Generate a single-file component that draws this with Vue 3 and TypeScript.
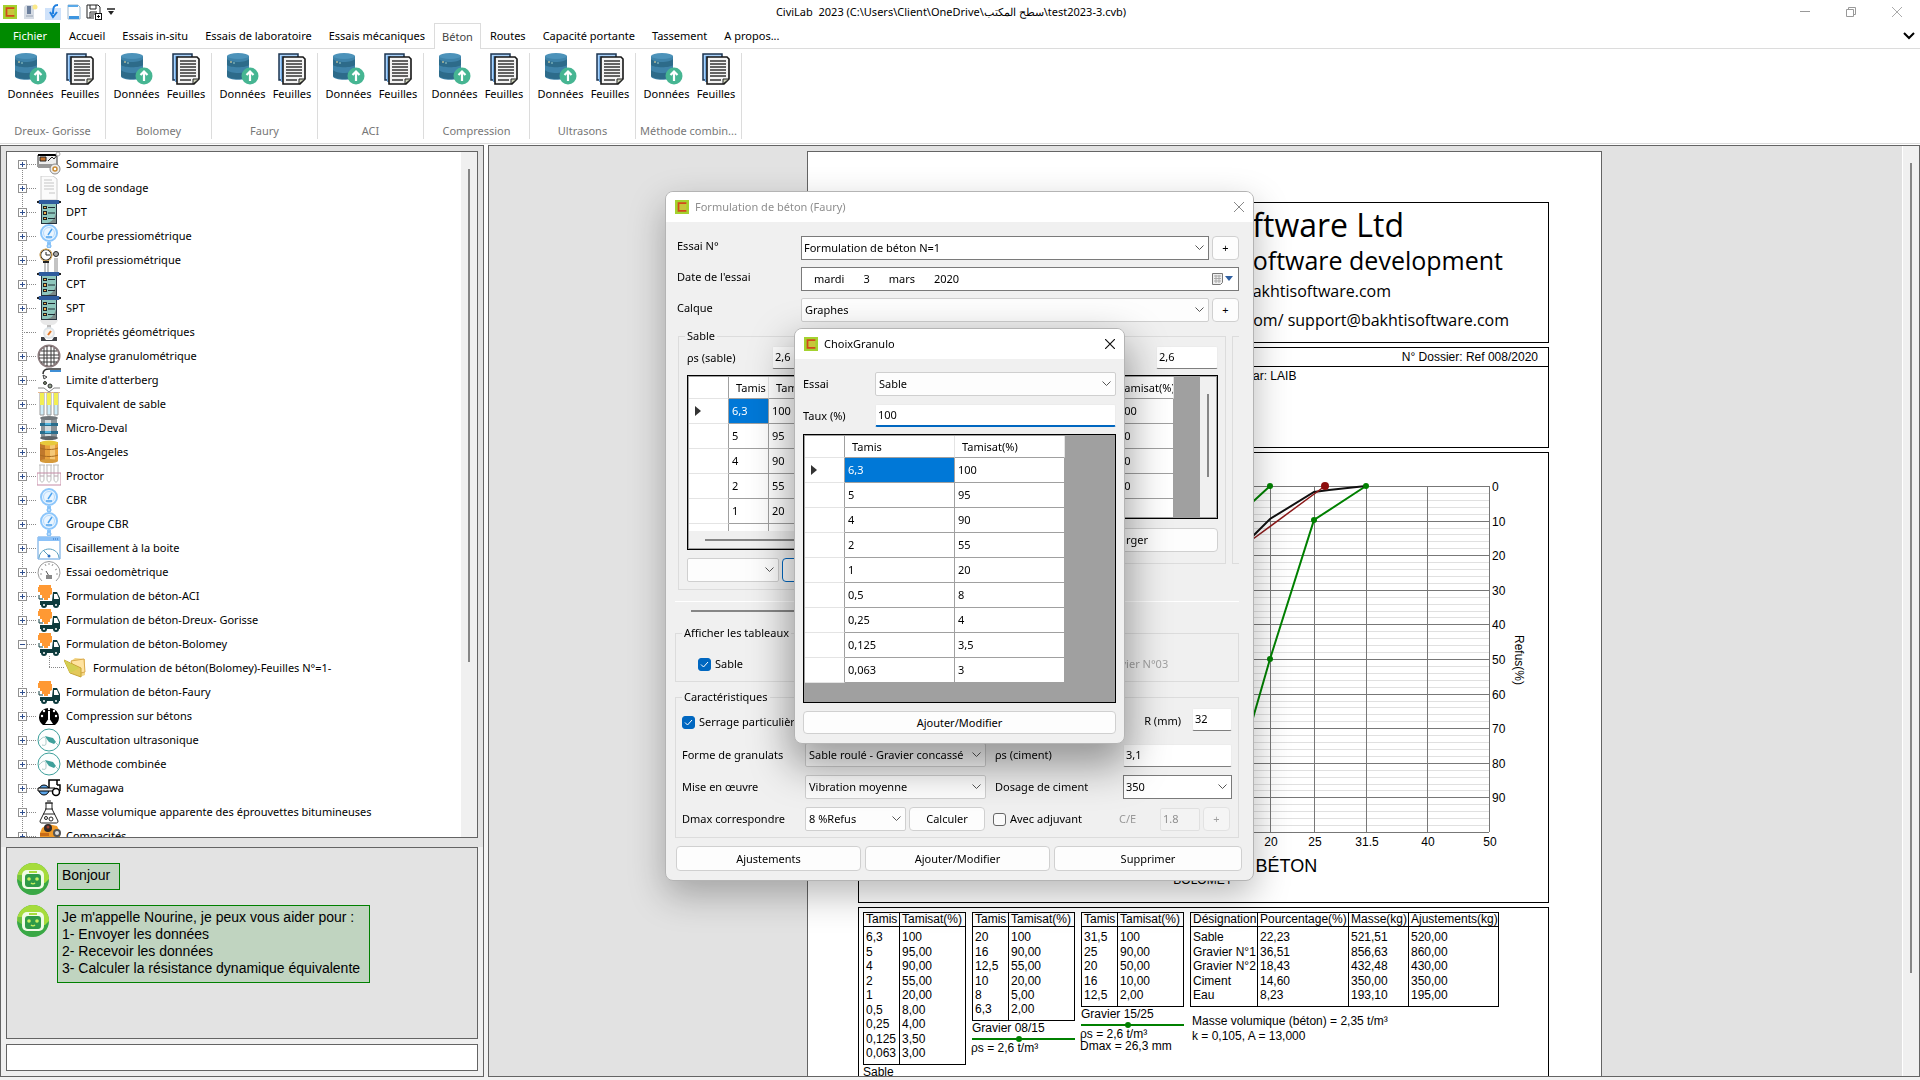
<script setup lang="ts">
import { ref } from 'vue'

interface TreeItem {
  label: string
  icon: string
  leaf?: boolean
  children?: { label: string; icon: string }[]
}

interface ResultTable {
  rows: [string, string][]
  caption: string
  line: boolean
  notes: string[]
}

const tabs = [
  'Accueil', 'Essais in-situ', 'Essais de laboratoire', 'Essais mécaniques', 'Béton',
  'Routes', 'Capacité portante', 'Tassement', 'A propos...',
]
const activeTab = ref('Béton')
const ribbonGroups = ['Dreux- Gorisse', 'Bolomey', 'Faury', 'ACI', 'Compression', 'Ultrasons', 'Méthode combin...']

const gauge =
  '<circle cx="12" cy="9" r="8" fill="#eaf5ff" stroke="#8cc6fb" stroke-width="2"/><circle cx="12" cy="9" r="5.500" fill="none" stroke="#b5dafc"/><path d="M11 11l4-6M9 13h6" stroke="#4ea3ee" stroke-width="1.500" fill="none"/><path d="M10 18h4v2h-4z" fill="#8cc6fb"/><circle cx="12" cy="22" r="2" fill="#b5dafc" stroke="#6db5f5"/>'
const server =
  '<path d="M4 3h16v21H4z" fill="#26323e"/><path d="M5 4h14v19H5z" fill="#8fc7bd"/><path d="M19 13v10h-9c5-1 8-5 9-10z" fill="#7b8a88"/><path d="M2 0h20l1 2-1 2H2L1 2z" fill="#2f5c9e"/><path d="M0 1h2v2H0zM22 1h2v2h-2z" fill="#222"/><path d="M6 6h4v3H6zM6 11h4v4H6zM6 17h4v3H6z" fill="#222"/><path d="M7 7h2v1H7zM7 12h2v2H7zM7 18h2v1H7z" fill="#f0b050"/><path d="M11 7.500h7M11 13h7M11 18.500h7" stroke="#1d2a33"/>'
const truck =
  '<path d="M2 1h12v3h1v6l-2 1v3h-2v2H7v-2H5v-3H3V8H1V3h1z" fill="#ff9933"/><path d="M2 11v4h4" fill="none" stroke="#0d3b3d" stroke-width="1"/><path d="M16 8h4l3 6v7H3v-4h12z" fill="#0d3b3d"/><path d="M17 10h3l2 5h-5z" fill="#fff"/><circle cx="7" cy="21" r="3" fill="#0d3b3d"/><circle cx="19" cy="21" r="3" fill="#0d3b3d"/><circle cx="7" cy="21" r="1" fill="#fff"/><circle cx="19" cy="21" r="1" fill="#fff"/>'
const probe =
  '<circle cx="12" cy="12" r="11" fill="#fdfefe" stroke="#3c9f9b"/><path d="M8 8l8 2 3 4-2 2-5-2-3-4z" fill="#3fa09b"/><path d="M2 13c5-6 7-4 7 0s0 5-4 4M19 15l2 2" stroke="#a9c9c7" fill="none"/>'

const icons: Record<string, string> = {
  gauge, server, truck, probe,
  summary:
    '<path d="M1 3h19v12H1z" fill="#eee" stroke="#333"/><path d="M1 3h19" stroke="#000" stroke-width="2"/><path d="M3 5h6v4H3z" fill="#c8742c" stroke="#222"/><path d="M11 9l4-4 2 2 4-5" stroke="#222" fill="none"/><path d="M1 12h14v4H1z" fill="#999"/><circle cx="21" cy="2" r="2" fill="#fff" stroke="#aaa"/><circle cx="18" cy="17" r="5" fill="#eee" stroke="#888"/><circle cx="18" cy="17" r="2" fill="#fff" stroke="#c88a33" stroke-width="1.500"/>',
  page: '<path d="M4 0h12l4 3v21H4z" fill="#fbfbfb" stroke="#ccc"/><path d="M7 4h8M7 7h10M7 10h10M7 13h10M12 17h6" stroke="#c5c5c5"/>',
  pressure:
    '<circle cx="9" cy="7" r="5.500" fill="#fff" stroke="#333" stroke-width="1.500"/><circle cx="9" cy="7" r="6" fill="none" stroke="#f0b85a"/><path d="M9 4v3h4" stroke="#222" fill="none"/><path d="M8 14v10M11 14v10M18 10v14M20 10v14" stroke="#888"/><path d="M6 14h6" stroke="#222" stroke-width="2"/><circle cx="19" cy="6" r="2.500" fill="#aaa" stroke="#222"/>',
  scale:
    '<path d="M3 0h18c-2 5-5 5-9 5s-7 0-9-5z" fill="#e8e8e8"/><path d="M10 5h4v4h-4z" fill="#bbb"/><circle cx="12" cy="13" r="6" fill="#dfe5e9"/><circle cx="12" cy="13" r="4" fill="#f7f3ee"/><path d="M11 15l3-4" stroke="#e0792b" stroke-width="2"/><path d="M4 17h3l2 3h6l2-3h3v4H4z" fill="#3d4045"/>',
  sieve:
    '<circle cx="12" cy="12" r="10.500" fill="#fff" stroke="#8a7a7c" stroke-width="2"/><path d="M4 7h16M2 11h20M2 14h20M4 18h16M7 4v16M10 2v20M14 2v20M17 4v16" stroke="#3a3a3a"/>',
  tap:
    '<path d="M24 1H12c-4 0-6 2-6 5" fill="none" stroke="#333" stroke-width="1.500"/><path d="M13 3h11" stroke="#3f8fd6" stroke-width="2"/><path d="M6 7l4 2-3 2z" fill="#eee" stroke="#444"/><circle cx="8" cy="15" r="1.500" fill="#7a8c6c" stroke="#333"/><circle cx="13" cy="18" r="2" fill="#8fa08a" stroke="#333"/><path d="M1 20h6l5 4 5-4h6" stroke="#888" fill="none"/>',
  tubes:
    '<path d="M1 0h22" stroke="#e8b88f" stroke-width="2"/><path d="M3 1h4v22H3zM10 1h4v22h-4zM17 1h4v22h-4z" fill="#cfeefa" stroke="#999"/><path d="M3 1h4v12H3zM10 1h4v12h-4zM17 1h4v12h-4z" fill="#f2ee54"/>',
  drumBlue:
    '<path d="M4 2h16v20H4z" fill="#8d9499"/><path d="M8 2h6v20H8z" fill="#d5dadd"/><path d="M3 7h18v3H3zM3 15h18v3H3z" fill="#2a6d8c"/><path d="M8 7h6v2H8zM8 15h6v2H8z" fill="#53b4dd"/><ellipse cx="12" cy="2" rx="9" ry="2" fill="#70767a"/><ellipse cx="12" cy="22" rx="9" ry="2" fill="#5c6266"/>',
  drumGold:
    '<path d="M3 2h18v19H3z" fill="#e8a13c"/><path d="M3 2h5v19H3z" fill="#c0782c"/><path d="M13 2h5v19h-5z" fill="#f5c877"/><ellipse cx="12" cy="3" rx="9" ry="2.500" fill="#e8c93b"/><path d="M3 8c4 2 14 2 18 0M3 15c4 2 14 2 18 0" stroke="#a86a20" fill="none"/><ellipse cx="12" cy="21" rx="9" ry="2" fill="#d69a3a"/>',
  proctor:
    '<path d="M3 1v14c0 4 4 4 4 0V1M10 1v14c0 4 4 4 4 0V1M17 1v14c0 4 4 4 4 0V1M2 1h6M9 1h6M16 1h6" fill="none" stroke="#bbb"/><path d="M0 9h24v12H0z" fill="none" stroke="#c48aa5"/><path d="M3 12h4M10 12h4M17 12h4" stroke="#b9a3ae"/>',
  windowGauge:
    '<path d="M1 1h22v22H1z" fill="#fff" stroke="#5f9fe0"/><path d="M1 1h22v4H1z" fill="#8cc2f8"/><path d="M16 3h1M18 3h1M20 3h1" stroke="#2a6dc0"/><path d="M2 22c1-12 19-12 20 0M12 20L6 14" fill="none" stroke="#5a9fc0"/><circle cx="12" cy="20" r="1.500" fill="#2a6dc0"/>',
  dial:
    '<path d="M5 21a11 11 0 1 1 14 0" fill="#fff" stroke="#999"/><path d="M3 14h2M4 9l2 1M8 4l1 2M12 3v2M16 4l-1 2M20 9l-2 1M21 14h-2" stroke="#999"/><path d="M12 16L9 11" stroke="#555"/><path d="M9 15h6v4H9z" fill="#888"/>',
  dialBlack:
    '<path d="M6 21a10 9.500 0 1 1 12 0z" fill="#000"/><path d="M12 8v6l4 6H8l4-6z" fill="#fff"/><circle cx="12" cy="5" r="1.200" fill="#fff"/><circle cx="7" cy="7" r="1.200" fill="#fff"/><circle cx="17" cy="7" r="1.200" fill="#fff"/><circle cx="5" cy="12" r="1.200" fill="#fff"/><circle cx="19" cy="12" r="1.200" fill="#fff"/><path d="M11 7h2v8h-2z" fill="#fff"/>',
  roller:
    '<circle cx="7" cy="14" r="5" fill="#5aa5ea" stroke="#000"/><path d="M1 12h17v3H1z" fill="#eee" stroke="#000"/><path d="M12 12V4h8v5M13 4h10M20 9h3v6" fill="none" stroke="#000" stroke-width="1.500"/><circle cx="19" cy="16" r="3.500" fill="#fff" stroke="#000" stroke-width="1.500"/>',
  flask:
    '<path d="M9 3h6v6l6 12c0 2-1 2-2 2H5c-1 0-2 0-2-2L9 9z" fill="#fff" stroke="#222"/><path d="M8 3h8M10 1h4M8 9h8M6 14h12" stroke="#222"/><circle cx="9" cy="18" r="1.500" fill="none" stroke="#222"/><circle cx="14" cy="19" r="2" fill="none" stroke="#222"/>',
  roller2:
    '<path d="M5 4l6-4 9 2 3 6v16H3V9z" fill="#f09a28"/><circle cx="11" cy="4" r="4" fill="#2f2a2a"/><circle cx="11" cy="3" r="1.500" fill="#a04030"/><circle cx="20" cy="9" r="4" fill="#555"/><circle cx="20" cy="9" r="2" fill="#ddd"/><path d="M3 9h9v3H3z" fill="#c86b18"/>',
  folder:
    '<path d="M7 5l4-3 10 1v16l-5 2z" fill="#f3d687"/><path d="M7 5l13-2 1 13-9 2z" fill="#ffe3a0" stroke="#d9a94c"/><path d="M0 4l17 8v9L6 17z" fill="#e3c95a" stroke="#c7a437"/><path d="M0 4l15 8-9 5z" fill="#d3cf52"/>',
}

const tree: TreeItem[] = [
  { label: 'Sommaire', icon: 'summary' },
  { label: 'Log de sondage', icon: 'page' },
  { label: 'DPT', icon: 'server' },
  { label: 'Courbe pressiométrique', icon: 'gauge' },
  { label: 'Profil pressiométrique', icon: 'pressure' },
  { label: 'CPT', icon: 'server' },
  { label: 'SPT', icon: 'server' },
  { label: 'Propriétés géométriques', icon: 'scale', leaf: true },
  { label: 'Analyse granulométrique', icon: 'sieve' },
  { label: "Limite d'atterberg", icon: 'tap' },
  { label: 'Equivalent de sable', icon: 'tubes' },
  { label: 'Micro-Deval', icon: 'drumBlue' },
  { label: 'Los-Angeles', icon: 'drumGold' },
  { label: 'Proctor', icon: 'proctor' },
  { label: 'CBR', icon: 'gauge' },
  { label: 'Groupe CBR', icon: 'gauge' },
  { label: 'Cisaillement à la boite', icon: 'windowGauge' },
  { label: 'Essai oedomètrique', icon: 'dial' },
  { label: 'Formulation de béton-ACI', icon: 'truck' },
  { label: 'Formulation de béton-Dreux- Gorisse', icon: 'truck' },
  {
    label: 'Formulation de béton-Bolomey',
    icon: 'truck',
    children: [{ label: 'Formulation de béton(Bolomey)-Feuilles N°=1-', icon: 'folder' }],
  },
  { label: 'Formulation de béton-Faury', icon: 'truck' },
  { label: 'Compression sur bétons', icon: 'dialBlack' },
  { label: 'Auscultation ultrasonique', icon: 'probe' },
  { label: 'Méthode combinée', icon: 'probe' },
  { label: 'Kumagawa', icon: 'roller' },
  { label: 'Masse volumique apparente des éprouvettes bitumineuses', icon: 'flask' },
  { label: 'Compacités', icon: 'roller2' },
]

const messages = [
  ['Bonjour'],
  [
    "Je m'appelle Nourine, je peux vous aider pour :",
    '1- Envoyer les données',
    '2- Recevoir les données',
    '3- Calculer la résistance dynamique équivalente',
  ],
]
const chatInput = ref('')

const sable: [string, string][] = [
  ['6,3', '100'], ['5', '95'], ['4', '90'], ['2', '55'], ['1', '20'],
  ['0,5', '8'], ['0,25', '4'], ['0,125', '3,5'], ['0,063', '3'],
]
const gravier: [string, string][] = [['20', '100'], ['16', '90'], ['12,5', '50'], ['10', '20'], ['8', '']]

const results: ResultTable[] = [
  {
    rows: [
      ['6,3', '100'], ['5', '95,00'], ['4', '90,00'], ['2', '55,00'], ['1', '20,00'],
      ['0,5', '8,00'], ['0,25', '4,00'], ['0,125', '3,50'], ['0,063', '3,00'],
    ],
    caption: 'Sable', line: false, notes: [],
  },
  {
    rows: [['20', '100'], ['16', '90,00'], ['12,5', '55,00'], ['10', '20,00'], ['8', '5,00'], ['6,3', '2,00']],
    caption: 'Gravier 08/15', line: true, notes: ['ρs = 2,6 t/m³'],
  },
  {
    rows: [['31,5', '100'], ['25', '90,00'], ['20', '50,00'], ['16', '10,00'], ['12,5', '2,00']],
    caption: 'Gravier 15/25', line: true, notes: ['ρs = 2,6 t/m³', 'Dmax = 26,3 mm'],
  },
]
const mix = [
  ['Sable', '22,23', '521,51', '520,00'],
  ['Gravier N°1', '36,51', '856,63', '860,00'],
  ['Gravier N°2', '18,43', '432,48', '430,00'],
  ['Ciment', '14,60', '350,00', '350,00'],
  ['Eau', '8,23', '193,10', '195,00'],
]

const chartTop = 33
const chartHeight = 346
const yAt = (refus: number) => Math.round(chartTop + (refus * chartHeight) / 100)
const minor = Array.from({ length: 50 }, (_, i) => i * 2).filter((v) => v % 10 !== 0)
const major = Array.from({ length: 11 }, (_, i) => i * 10)
const sieves = [
  { x: 335, label: '12.5' }, { x: 373, label: '16' }, { x: 411, label: '20' }, { x: 455, label: '25' },
  { x: 507, label: '31.5' }, { x: 568, label: '40' }, { x: 630, label: '50' },
]

const taux = ref('100')
const showSable = ref(true)
const serrage = ref(true)
</script>

<template>
  <div class="app">
    <header class="titlebar">
      <div class="quick">
        <svg class="logo" viewBox="0 0 16 16"><rect width="16" height="16" fill="#a4d22f" /><rect x="4" y="4" width="9" height="8" fill="#c8c53a" /><path d="M13 3.500H4v9h9" fill="none" stroke="#d2491b" stroke-width="2" /></svg>
        <svg width="16" height="16" viewBox="0 0 16 16"><path d="M3 1h8v14H1V3z" fill="#d5dbe3" /><path d="M4 2h4v8H4z" fill="#6c7f9c" /><path d="M3 12h7" stroke="#9aa5b5" /><circle cx="12" cy="3" r="2.500" fill="#fbe98a" /></svg>
        <svg width="18" height="16" viewBox="0 0 18 16"><path d="M1 4h16v12H1z" fill="#cfe2fa" /><path d="M14 1c-4 0-5 2-5 9M6 8l3 5 4-5" fill="none" stroke="#1f7fe0" stroke-width="2" /></svg>
        <svg width="14" height="16" viewBox="0 0 14 16"><path d="M1 1h10l2 2v12H1z" fill="#fff" stroke="#9db8cf" /><path d="M1 1h10v2H1z" fill="#5aa9e8" /><path d="M2 12h10v3H2z" fill="#3d95e0" /></svg>
        <svg width="16" height="16" viewBox="0 0 16 16"><path d="M1 1h11l2 2v7M8 14H1V1M4 1v4h6V1M4 14V8h7M5 10h4M5 12h3" fill="none" stroke="#222" /><rect x="9.500" y="9.500" width="6" height="6" fill="#fff" stroke="#111" /><path d="M12.500 11v3M11 12.500h3" stroke="#111" /></svg>
        <svg width="8" height="8" viewBox="0 0 8 8"><path d="M0 1h8" stroke="#222" stroke-width="1.500" /><path d="M1 3h6L4 7z" fill="#222" /></svg>
      </div>
      <h1>CiviLab&nbsp; 2023 (C:\Users\Client\OneDrive\سطح المكتب\test2023-3.cvb)</h1>
      <div class="winbtns">
        <button aria-label="Réduire"><svg width="10" height="10"><path d="M0 4.500h10" stroke="#999" /></svg></button>
        <button aria-label="Restaurer"><svg width="10" height="10"><path d="M2.500 2V.5h7v7H8M.5 2.500h7v7h-7z" fill="none" stroke="#999" /></svg></button>
        <button aria-label="Fermer"><svg width="10" height="10"><path d="M0 0l10 10M10 0L0 10" stroke="#aaa" /></svg></button>
      </div>
    </header>

    <nav class="tabs">
      <button class="file">Fichier</button>
      <button v-for="t in tabs" :key="t" class="tab" :class="{ active: t === activeTab }" @click="activeTab = t">{{ t }}</button>
      <button class="collapse" aria-label="Réduire le ruban"><svg width="12" height="8" viewBox="0 0 12 8"><path d="M1 1l5 5 5-5" fill="none" stroke="#000" stroke-width="2" /></svg></button>
    </nav>

    <div class="ribbon">
      <section v-for="g in ribbonGroups" :key="g" class="rgroup">
        <div class="rbtns">
          <button class="rbtn">
            <svg width="32" height="32" viewBox="0 0 32 32">
              <path d="M0 3v20c0 5 22 5 22 0V3z" fill="#3f83a9" />
              <ellipse cx="11" cy="3" rx="11" ry="3" fill="#4d93ba" />
              <path d="M0 6c3 4 19 4 22 0v6c-3 3-19 3-22 0zM0 17c3 4 19 4 22 0v6c-3 4-19 4-22 0z" fill="#2d6b8a" />
              <path d="M3 9h2" stroke="#f3e0a0" /><path d="M6 10h2" stroke="#9cc" />
              <circle cx="23" cy="23" r="8.500" fill="#46b592" />
              <path d="M23 28v-9M19.500 22l3.500-3.500 3.500 3.500" fill="none" stroke="#fff" stroke-width="2.200" />
            </svg>
            <span>Données</span>
          </button>
          <button class="rbtn sheets">
            <svg width="28" height="32" viewBox="0 0 28 32">
              <path d="M1 1h19v26H1z" fill="#a9d2fb" stroke="#1c3550" stroke-width="1.500" />
              <path d="M3 3h4v26H3z" fill="#6ea6de" />
              <path d="M5 4h20l2 2v20l-5 5H5z" fill="#f4f4f4" stroke="#161616" stroke-width="1.600" />
              <path d="M8 8h16M8 11h16M8 14h16M8 17h16M8 20h16M8 23h16M8 27h11" stroke="#333" stroke-width="1.400" />
              <path d="M21 31v-5h6z" fill="#cbd0b8" stroke="#222" />
            </svg>
            <span>Feuilles</span>
          </button>
        </div>
        <p>{{ g }}</p>
      </section>
    </div>

    <main class="work">
      <aside class="side">
        <div class="treewrap">
          <div class="treebox">
            <ul class="tree">
              <li v-for="n in tree" :key="n.label">
                <div class="node">
                  <span v-if="n.leaf" class="noexp"></span>
                  <button v-else class="exp" :aria-label="n.label">
                    <svg width="9" height="9"><path :d="n.children ? 'M2 4.500h5' : 'M2 4.500h5M4.500 2v5'" stroke="#2f4f8f" /></svg>
                  </button>
                  <i class="dots"></i>
                  <svg width="24" height="24" viewBox="0 0 24 24" v-html="icons[n.icon]"></svg>
                  <span class="name">{{ n.label }}</span>
                </div>
                <ul v-if="n.children" class="sub">
                  <li v-for="c in n.children" :key="c.label" class="node">
                    <i class="elbow"></i>
                    <svg width="24" height="24" viewBox="0 0 24 24" v-html="icons[c.icon]"></svg>
                    <span class="name">{{ c.label }}</span>
                  </li>
                </ul>
              </li>
            </ul>
            <div class="vscroll"><i></i></div>
          </div>
        </div>
        <div class="chatwrap">
          <div class="chat">
            <div v-for="(m, i) in messages" :key="i" class="msg">
              <svg width="32" height="32" viewBox="0 0 32 32">
                <circle cx="16" cy="16" r="16" fill="#3aa845" />
                <path d="M0 16a16 16 0 0 1 32 0l-4 4H6z" fill="#a6dc3c" />
                <path d="M1 12a16 16 0 0 0 14 20V12z" fill="#38a848" opacity=".5" />
                <rect x="5" y="7" width="22" height="19" rx="5" fill="#f1fbe6" />
                <rect x="12" y="8" width="8" height="2" fill="#a6dc3c" />
                <rect x="8" y="11" width="16" height="13" rx="3" fill="#2f9a48" />
                <circle cx="12" cy="16" r="1.800" fill="#c8f060" /><circle cx="20" cy="16" r="1.800" fill="#c8f060" />
                <path d="M14 20c1 1 3 1 4 0" stroke="#c8f060" fill="none" stroke-width="1.500" />
              </svg>
              <div class="bubble"><p v-for="l in m" :key="l">{{ l }}</p></div>
            </div>
          </div>
          <input v-model="chatInput" class="chatinput" aria-label="Message" />
        </div>
      </aside>

      <section class="canvas">
        <div class="scrollarea">
          <article class="sheet">
            <div class="box letterhead">
              <p class="l1">Bakhti Software Ltd</p>
              <p class="l2">Geotechnical software development</p>
              <p class="l3">www.bakhtisoftware.com</p>
              <p class="l4">contact@bakhtisoftware.com/ support@bakhtisoftware.com</p>
            </div>
            <div class="box project">
              <p class="ref">N° Dossier: Ref 008/2020</p>
              <p class="by">Réalisé par: LAIB</p>
            </div>
            <div class="box chart">
              <svg width="688" height="448" viewBox="0 0 688 448">
                <line v-for="v in minor" :key="'m' + v" x1="40" x2="630" :y1="yAt(v) + 0.5" :y2="yAt(v) + 0.5" stroke="#e0e0e0" />
                <line v-for="v in major" :key="'j' + v" x1="40" x2="630" :y1="yAt(v) + 0.5" :y2="yAt(v) + 0.5" stroke="#777" />
                <line v-for="s in sieves" :key="s.label" :x1="s.x + 0.5" :x2="s.x + 0.5" y1="33" y2="379" stroke="#777" />
                <polyline points="335,206 373,68 411,33" class="green" />
                <polyline points="335,330 373,331 394,265 411,206 455,67 507,33" class="green" />
                <polyline points="335,130 394,83 411,66 455,39 470,37 507,33" fill="none" stroke="#111" stroke-width="2" />
                <polyline points="335,130 394,86 466,33" fill="none" stroke="#8c1a1a" stroke-width="1.500" />
                <g fill="#008000"><circle cx="411" cy="33" r="3" /><circle cx="507" cy="33" r="3" /><circle cx="455" cy="67" r="3" /><circle cx="411" cy="206" r="3" /></g>
                <circle cx="466" cy="33" r="4" fill="#8c0d0d" />
                <g class="axis">
                  <text v-for="v in major.slice(0, 10)" :key="v" x="633" :y="yAt(v) + 5">{{ v }}</text>
                  <text v-for="s in sieves" :key="s.label" :x="s.x + 1" y="393" text-anchor="middle">{{ s.label }}</text>
                  <text transform="translate(656 182) rotate(90)">Refus(%)</text>
                </g>
                <text class="ctitle" x="345" y="419" text-anchor="middle">FORMULATION DE BÉTON</text>
                <text class="csub" x="344" y="431" text-anchor="middle">BOLOMEY</text>
              </svg>
            </div>
            <div class="box tables">
              <div v-for="(r, i) in results" :key="i" class="tcol">
                <table class="dt small">
                  <thead><tr><th>Tamis</th><th>Tamisat(%)</th></tr></thead>
                  <tbody><tr v-for="row in r.rows" :key="row[0]"><td>{{ row[0] }}</td><td>{{ row[1] }}</td></tr></tbody>
                </table>
                <p class="cap">{{ r.caption }}</p>
                <svg v-if="r.line" width="103" height="6" viewBox="0 0 103 6"><path d="M0 3h103" stroke="#008000" stroke-width="2" /><circle cx="47" cy="3" r="3" fill="#008000" /></svg>
                <p v-for="n in r.notes" :key="n" class="note">{{ n }}</p>
              </div>
              <div class="tcol">
                <table class="dt mix">
                  <thead><tr><th>Désignation</th><th>Pourcentage(%)</th><th>Masse(kg)</th><th>Ajustements(kg)</th></tr></thead>
                  <tbody><tr v-for="row in mix" :key="row[0]"><td v-for="c in row" :key="c">{{ c }}</td></tr></tbody>
                </table>
                <p class="sum">Masse volumique (béton) = 2,35 t/m³</p>
                <p class="sum tight">k = 0,105, A = 13,000</p>
              </div>
            </div>
          </article>
        </div>
        <div class="vscroll page"><i></i></div>
      </section>
    </main>

    <div class="layer">
      <div class="dialog faury" role="dialog" aria-label="Formulation de béton (Faury)">
        <div class="dtitle inactive">
          <svg class="logo" viewBox="0 0 16 16"><rect width="16" height="16" fill="#a4d22f" /><rect x="4" y="4" width="9" height="8" fill="#c8c53a" /><path d="M13 3.500H4v9h9" fill="none" stroke="#d2491b" stroke-width="2" /></svg>
          <h2>Formulation de béton (Faury)</h2>
          <button aria-label="Fermer"><svg width="10" height="10"><path d="M0 0l10 10M10 0L0 10" stroke="#888" /></svg></button>
        </div>
        <div class="fbody">
          <div class="frow">
            <label for="essai">Essai N°</label>
            <select id="essai" class="combo dark"><option>Formulation de béton N=1</option></select>
            <button class="btn plus">+</button>
          </div>
          <div class="frow">
            <label for="jour">Date de l'essai</label>
            <div class="date">
              <button id="jour">mardi</button><span>3</span><span>mars</span><span>2020</span>
              <svg width="22" height="14" viewBox="0 0 22 14"><path d="M1.500 1.500h10v9l-2 2h-8z" fill="#eee" stroke="#777" /><path d="M3 4h7M3 6.500h7M3 9h7M5 3v8M8 3v8" stroke="#aaa" /><path d="M14 4h8l-4 5z" fill="#2f5fa0" /></svg>
            </div>
          </div>
          <div class="frow">
            <label for="calque">Calque</label>
            <select id="calque" class="combo"><option>Graphes</option></select>
            <button class="btn plus">+</button>
          </div>

          <div class="pane">
            <div class="groups">
              <fieldset class="g g1">
                <legend>Sable</legend>
                <div class="rho"><label for="r1">ρs (sable)</label><input id="r1" class="txt" value="2,6" /></div>
                <div class="grid tall">
                  <div class="clip">
                    <table>
                      <thead><tr><th class="rh"></th><th>Tamis</th><th>Tamisat(%)</th></tr></thead>
                      <tbody>
                        <tr v-for="(r, i) in sable.slice(0, 6)" :key="r[0]"><td class="rh"><svg v-if="i === 0" width="6" height="10"><path d="M0 0l6 5-6 5z" fill="#333" /></svg></td><td :class="{ sel: i === 0 }">{{ i < 5 ? r[0] : '' }}</td><td>{{ i < 5 ? r[1] : '' }}</td></tr>
                      </tbody>
                    </table>
                  </div>
                  <div class="hscroll"><i></i></div>
                </div>
                <div class="under"><select class="combo" aria-label="Tamis"><option></option></select><button class="btn focus">+</button></div>
              </fieldset>
              <fieldset class="g g2">
                <legend>Gravier N°01</legend>
                <div class="rho"><label for="r2">ρs (gravier)</label><input id="r2" class="txt" value="2,6" /></div>
                <div class="grid short">
                  <div class="clip">
                    <table>
                      <thead><tr><th class="rh"></th><th>Tamis</th><th>Tamisat(%)</th></tr></thead>
                      <tbody>
                        <tr v-for="r in gravier" :key="r[0]"><td class="rh"></td><td>{{ r[0] }}</td><td>{{ r[1] }}</td></tr>
                      </tbody>
                    </table>
                  </div>
                  <div class="vscroll inner"><i></i></div>
                </div>
                <button class="btn load">Charger</button>
              </fieldset>
              <fieldset class="g g3"></fieldset>
            </div>
            <div class="panescroll"><i></i></div>
          </div>

          <fieldset class="show">
            <legend>Afficher les tableaux</legend>
            <label><input v-model="showSable" type="checkbox" />Sable</label>
            <label><input type="checkbox" />Gravier N°01</label>
            <label><input type="checkbox" />Gravier N°02</label>
            <label class="off"><input type="checkbox" disabled />Gravier N°03</label>
          </fieldset>

          <fieldset class="carac">
            <legend>Caractéristiques</legend>
            <div class="crow first">
              <label class="check"><input v-model="serrage" type="checkbox" />Serrage particulière</label>
              <label class="rmm" for="rmm">R (mm)</label>
              <input id="rmm" class="txt w40" value="32" />
            </div>
            <div class="crow">
              <label for="forme">Forme de granulats</label>
              <select id="forme" class="combo"><option>Sable roulé - Gravier concassé</option></select>
              <label for="cim">ρs (ciment)</label>
              <input id="cim" class="txt" value="3,1" />
            </div>
            <div class="crow">
              <label for="mise">Mise en œuvre</label>
              <select id="mise" class="combo"><option>Vibration moyenne</option></select>
              <label for="dosage">Dosage de ciment</label>
              <select id="dosage" class="combo dark"><option>350</option></select>
            </div>
            <div class="crow last">
              <label for="dmax">Dmax correspondre</label>
              <select id="dmax" class="combo"><option>8 %Refus</option></select>
              <button class="btn">Calculer</button>
              <label class="check"><input type="checkbox" />Avec adjuvant</label>
              <label class="ce" for="ce">C/E</label>
              <input id="ce" class="txt w40" value="1.8" disabled />
              <button class="btn plus" disabled>+</button>
            </div>
          </fieldset>

          <div class="actions">
            <button class="btn">Ajustements</button>
            <button class="btn">Ajouter/Modifier</button>
            <button class="btn">Supprimer</button>
          </div>
        </div>
      </div>

      <div class="dialog choix" role="dialog" aria-label="ChoixGranulo">
        <div class="dtitle">
          <svg class="logo" viewBox="0 0 16 16"><rect width="16" height="16" fill="#a4d22f" /><rect x="4" y="4" width="9" height="8" fill="#c8c53a" /><path d="M13 3.500H4v9h9" fill="none" stroke="#d2491b" stroke-width="2" /></svg>
          <h2>ChoixGranulo</h2>
          <button aria-label="Fermer"><svg width="10" height="10"><path d="M0 0l10 10M10 0L0 10" stroke="#111" stroke-width="1.200" /></svg></button>
        </div>
        <div class="cbody">
          <div class="xrow"><label for="xessai">Essai</label><select id="xessai" class="combo"><option>Sable</option></select></div>
          <div class="xrow"><label for="taux">Taux (%)</label><input id="taux" v-model="taux" class="txt active" /></div>
          <div class="grid main">
            <table>
              <thead><tr><th class="rh"></th><th>Tamis</th><th>Tamisat(%)</th></tr></thead>
              <tbody>
                <tr v-for="(r, i) in sable" :key="r[0]"><td class="rh"><svg v-if="i === 0" width="6" height="10"><path d="M0 0l6 5-6 5z" fill="#333" /></svg></td><td :class="{ sel: i === 0 }">{{ r[0] }}</td><td>{{ r[1] }}</td></tr>
              </tbody>
            </table>
          </div>
          <button class="btn wide">Ajouter/Modifier</button>
        </div>
      </div>
    </div>
  </div>
</template>

<style>
body { margin: 0; }
</style>

<style scoped>
.app {
  height: 100vh;
  display: flex;
  flex-direction: column;
  overflow: hidden;
  background: #fff;
  color: #000;
  font-family: 'Noto Sans', 'Open Sans', sans-serif;
  font-size: 11px;
  line-height: 16px;
}
.app * { box-sizing: border-box; }
h1, h2, p, ul { margin: 0; padding: 0; font-weight: 400; font-size: inherit; }
ul { list-style: none; }
button, input, select { font: inherit; color: inherit; margin: 0; }
svg { display: block; flex: none; }
.logo { width: 16px; height: 14px; }

.titlebar { height: 23px; display: flex; align-items: center; flex: none; }
.quick { width: 120px; padding-left: 2px; display: flex; align-items: center; gap: 5px; }
.titlebar h1 { flex: 1; text-align: center; white-space: nowrap; }
.winbtns { width: 138px; display: flex; }
.winbtns button { width: 46px; height: 23px; border: 0; background: none; display: grid; place-items: center; padding: 0; }

.tabs { height: 26px; flex: none; display: flex; gap: 1px; border-bottom: 1px solid #dcdcdc; }
.tabs button { border: 0; background: none; padding: 0 8px; white-space: nowrap; }
.tabs .file { width: 60px; background: #008a00; color: #fff; }
.tabs .tab.active { border: 1px solid #dcdcdc; border-bottom: 0; background: #fff; color: #444; padding: 0 7px; margin-bottom: -1px; }
.tabs .collapse { margin-left: auto; padding: 0 5px; }

.ribbon { height: 95px; flex: none; display: flex; padding-top: 4px; border-bottom: 1px solid #dcdcdc; }
.rgroup { width: 106px; height: 86px; border-right: 1px solid #dcdcdc; display: flex; flex-direction: column; justify-content: space-between; }
.rbtns { display: flex; padding-left: 7px; gap: 6px; }
.rbtn { border: 0; background: none; padding: 0; width: 47px; display: flex; flex-direction: column; align-items: center; gap: 1px; }
.rbtn.sheets { width: 40px; }
.rgroup p { text-align: center; color: #777; white-space: nowrap; }

.work { flex: 1; min-height: 0; display: flex; gap: 4px; margin-top: 1px; padding-bottom: 3px; background: linear-gradient(#fff, #f2f2f2); }
.side { width: 484px; border: 1px solid #646464; display: flex; flex-direction: column; background: #f0f0f0; min-height: 0; }
.treewrap { flex: 1; min-height: 0; padding: 5px 5px 9px; background: #e3e3e3; display: flex; }
.treebox { flex: 1; min-height: 0; border: 1px solid #646464; background: #fff; display: flex; overflow: hidden; }
.tree { flex: 1; height: 100%; overflow: hidden; background: repeating-linear-gradient(#888 0 1px, transparent 1px 2px) 15px 12px / 1px 100% no-repeat; }
.node { height: 24px; display: flex; align-items: center; white-space: nowrap; padding-left: 11px; }
.exp { width: 9px; height: 9px; padding: 0; border: 0; outline: 1px solid #919191; outline-offset: -1px; background: #fff; }
.dots { width: 10px; height: 1px; background: repeating-linear-gradient(90deg, #888 0 1px, transparent 1px 2px); }
.noexp { width: 9px; height: 1px; background: repeating-linear-gradient(90deg, transparent 0 1px, #888 1px 2px) right / 4px 1px no-repeat; }
.name { padding-left: 5px; }
.sub .node { padding-left: 42px; }
.elbow { width: 15px; height: 12px; margin-bottom: 12px; background: repeating-linear-gradient(#888 0 1px, transparent 1px 2px) left / 1px 100% no-repeat, repeating-linear-gradient(90deg, #888 0 1px, transparent 1px 2px) bottom / 100% 1px no-repeat; }
.vscroll { width: 16px; background: #f0f0f0; display: flex; justify-content: center; flex: none; }
.vscroll i { width: 2px; background: #868686; }
.treebox .vscroll i { margin: 17px 0 175px; }

.chatwrap { padding: 0 5px 5px; display: flex; flex-direction: column; gap: 5px; }
.chat { height: 192px; border: 1px solid #646464; background: #e3e3e3; padding: 15px 10px; display: flex; flex-direction: column; gap: 10px; font-family: 'Liberation Sans', Arial, sans-serif; font-size: 14px; }
.msg { display: flex; gap: 8px; align-items: flex-start; }
.bubble { border: 1px solid #008000; background: #c0d4c0; padding: 3px 9px 5px 4px; line-height: 17px; }
.chatinput { height: 27px; border: 1px solid #646464; background: #fff; outline: 0; padding: 0 4px; }

.canvas { flex: 1; min-width: 0; border: 1px solid #646464; background: #e2e2e2; display: flex; overflow: hidden; }
.scrollarea { flex: 1; min-width: 0; padding: 5px 0 0 18px; display: flex; justify-content: center; }
.vscroll.page { width: 17px; border-left: 1px solid #fff; }
.vscroll.page i { margin: 17px 0 103px; }
.sheet { width: 795px; flex: none; height: 1120px; background: #fff; border: 1px solid #646464; padding: 50px 52px 0 50px; display: flex; flex-direction: column; gap: 4px; font-family: 'Liberation Sans', Arial, sans-serif; font-size: 12px; line-height: 14px; }
.box { border: 1px solid #000; }
.letterhead { height: 141px; padding-top: 3px; font-family: 'Open Sans', sans-serif; text-align: right; overflow: hidden; white-space: nowrap; }
.l1 { font-size: 32px; line-height: 38px; padding-right: 144px; }
.l2 { font-size: 25px; line-height: 32px; padding-right: 45px; }
.l3 { font-size: 16px; line-height: 30px; padding-right: 157px; }
.l4 { font-size: 16px; line-height: 28px; padding-right: 39px; }
.project { height: 101px; }
.ref { text-align: right; padding: 2px 10px; border-bottom: 1px solid #000; }
.by { padding: 2px 0 0 344px; }
.chart { height: 451px; }
.green { fill: none; stroke: #008000; stroke-width: 2; }
.axis { font-size: 12px; }
.ctitle { font-size: 18px; }
.csub { font-size: 12px; }
.tables { flex: 1; padding: 4px; display: flex; gap: 6px; align-items: flex-start; white-space: nowrap; }
.dt { border-collapse: collapse; table-layout: fixed; width: 103px; border: 1px solid #000; }
.dt th { font-weight: 400; text-align: left; padding: 0 0 0 2px; border: 1px solid #000; height: 14px; line-height: 13px; }
.dt td { padding: 0 0 0 2px; border: 0 solid #000; border-left-width: 1px; line-height: 14px; height: 14px; }
.dt tbody tr:nth-child(even) td { height: 15px; }
.dt tbody tr:first-child td { padding-top: 3px; }
.dt tbody tr:last-child td { padding-bottom: 4px; }
.small th:first-child { width: 36px; }
.mix { width: 309px; }
.mix th:nth-child(1) { width: 67px; }
.mix th:nth-child(2) { width: 91px; }
.mix th:nth-child(3) { width: 60px; }
.cap { line-height: 15px; }
.note { line-height: 11px; padding-top: 1px; margin-left: -1px; }
.sum { line-height: 15px; padding: 7px 0 0 2px; }
.sum.tight { padding-top: 0; }

.layer { position: fixed; inset: 0 1px 8px 0; display: grid; place-items: center; pointer-events: none; }
.dialog { grid-area: 1 / 1; pointer-events: auto; background: #f0f0f0; border: 1px solid #b4b4b4; border-radius: 8px; overflow: hidden; }
.faury { width: 589px; height: 690px; box-shadow: 0 14px 36px rgba(0, 0, 0, 0.28); }
.choix { width: 331px; height: 416px; box-shadow: 0 18px 40px 4px rgba(0, 0, 0, 0.38); }
.dtitle { height: 30px; background: #fff; display: flex; align-items: center; gap: 5px; padding: 0 9px 1px 8px; }
.dtitle h2 { flex: 1; }
.dtitle.inactive h2 { color: #8f8f8f; }
.dtitle button { border: 0; background: none; padding: 0; }

.combo { appearance: none; height: 24px; border: 1px solid #cfcfcf; border-radius: 2px; padding: 0 18px 0 3px; outline: 0; background: #fdfdfd url("data:image/svg+xml,%3Csvg xmlns='http://www.w3.org/2000/svg' width='9' height='6'%3E%3Cpath d='M.5 .5l4 4 4-4' fill='none' stroke='%23555'/%3E%3C/svg%3E") right 4px center no-repeat; }
.combo.dark { border-color: #7a7a7a; border-radius: 0; background-color: #fff; padding-left: 2px; }
.btn { height: 24px; border: 1px solid #d0d0d0; border-radius: 4px; background: #fdfdfd; padding: 0; text-align: center; }
.btn:disabled { color: #a0a0a0; background: #f5f5f5; border-color: #e2e2e2; }
.plus { width: 27px; flex: none; }
.txt { height: 23px; min-width: 0; border: 1px solid #ececec; border-bottom-color: #7f7f7f; background: #fff; padding: 0 2px 2px; outline: 0; border-radius: 2px; }
.txt:disabled { background: #f3f3f3; border-color: #e0e0e0; color: #8f8f8f; }
.txt.active { border-bottom: 2px solid #0067c0; }
fieldset { border: 1px solid #dcdcdc; margin: 0; padding: 0; min-width: 0; }
legend { padding: 0 2px; line-height: 16px; }
input[type='checkbox'] { appearance: none; width: 13px; height: 13px; flex: none; border: 1px solid #666; border-radius: 3px; background: #fafafa; }
input[type='checkbox']:checked { border-color: #0067c0; background: #0067c0 url("data:image/svg+xml,%3Csvg xmlns='http://www.w3.org/2000/svg' width='9' height='7'%3E%3Cpath d='M1 3.500l2.500 2.500 4.500-5' fill='none' stroke='%23fff'/%3E%3C/svg%3E") center no-repeat; }

.fbody { padding: 14px 14px 0 9px; display: flex; flex-direction: column; }
.frow { display: flex; height: 24px; margin-bottom: 7px; gap: 3px; }
.frow label { width: 123px; padding: 2px 0 0 2px; flex: none; }
.frow .combo { flex: 1; min-width: 0; }
.date { flex: 1; border: 1px solid #7a7a7a; background: #fff; display: flex; align-items: center; padding: 0 5px 0 12px; gap: 19px; }
.date button { border: 0; background: none; padding: 0; }
.date svg { margin-left: auto; }

.pane { height: 300px; margin-top: -4px; display: flex; flex-direction: column; }
.groups { flex: none; height: 276px; padding: 3px 0 0 3px; display: flex; gap: 6px; align-items: flex-start; overflow: hidden; }
.g { width: 271px; flex: none; padding: 2px 7px 0 8px; }
.g1 { height: 262px; }
.g2 { height: 236px; }
.g3 { height: 228px; margin-top: 8px; }
.g legend { margin-left: -2px; }
.rho { display: flex; justify-content: space-between; align-items: center; margin-bottom: 6px; }
.rho .txt { width: 62px; }
.g1 .rho .txt { width: 169px; }
.under { display: flex; gap: 3px; margin-top: 8px; }
.under .combo { width: 92px; }
.under .btn { width: 30px; }
.btn.focus { border-color: #0067c0; }
.load { display: block; width: 182px; margin: 9px 0 0 auto; }

.grid { border: 1px solid #000; background: #a0a0a0; padding: 1px; overflow: hidden; display: flex; align-items: flex-start; }
.grid.tall { height: 175px; flex-direction: column; }
.grid.short { height: 144px; }
.clip { flex: 1; min-height: 0; overflow: hidden; align-self: stretch; }
.grid table { border-collapse: separate; border-spacing: 0; table-layout: fixed; width: 224px; }
.grid th, .grid td { background: #fff; font-weight: 400; text-align: left; border: 0 solid #a0a0a0; border-width: 0 1px 1px 0; padding: 0 0 0 3px; overflow: hidden; white-space: nowrap; }
.grid th { height: 22px; padding-left: 7px; border-right-color: #e4e4e4; }
.grid td { height: 25px; }
.grid .rh { width: 40px; border-bottom-color: #e4e4e4; padding-left: 6px; border-right-color: #a0a0a0; }
.grid td.sel { background: #0078d7; color: #fff; }
.tall th:nth-child(2) { width: 40px; }
.short table { width: 208px; }
.short th:nth-child(3) { width: 59px; padding-left: 4px; }
.hscroll { height: 17px; align-self: stretch; flex: none; background: #f0f0f0; padding: 8px 40px 0 16px; }
.hscroll i, .panescroll i { display: block; height: 2px; background: #868686; }
.vscroll.inner { align-self: stretch; }
.vscroll.inner i { margin: 17px 0 40px; }
.panescroll { border-top: 1px solid #fff; height: 20px; padding: 8px 200px 0 16px; }

.show { height: 57px; display: flex; align-items: flex-start; padding: 15px 0 0 22px; margin-bottom: 7px; }
.show legend { margin-left: -16px; }
.show label { display: flex; align-items: center; gap: 4px; width: 129px; }
.off { color: #a0a0a0; }
.off input { border-color: #c8c8c8; }
.carac { height: 149px; padding: 3px 6px 0 6px; }
.crow { display: grid; grid-template-columns: 123px 181px 7px 130px 109px; align-items: center; height: 24px; margin-bottom: 8px; }
.crow > :nth-child(3) { grid-column: 4; padding-left: 2px; }
.crow.first { display: flex; height: 27px; align-items: flex-start; justify-content: flex-end; }
.crow.first .check { margin-right: auto; padding-top: 6px; }
.crow.first .rmm { padding: 5px 11px 0 0; }
.check { display: flex; align-items: center; gap: 4px; white-space: nowrap; }
.w40 { width: 40px; }
.crow.first .w40 { padding: 0 2px 2px; }
.crow.last { display: flex; gap: 3px; }
.crow.last > :first-child { width: 120px; }
.crow.last .combo { width: 101px; }
.crow.last .btn { width: 76px; padding: 0; }
.crow.last .plus { width: 27px; }
.crow.last .check { width: 123px; margin-left: 5px; }
.crow.last .ce { width: 38px; color: #999; }

.actions { display: grid; grid-template-columns: 185px 185px 1fr; gap: 4px; padding-top: 8px; margin-right: -3px; margin-left: 1px; }
.actions .btn { height: 25px; }

.cbody { padding: 13px 8px 0; display: flex; flex-direction: column; }
.xrow { display: flex; height: 24px; margin-bottom: 8px; }
.xrow label { width: 72px; padding-top: 4px; flex: none; }
.xrow > :last-child { flex: 1; min-width: 0; }
.grid.main { height: 269px; margin-top: -2px; }
.main table { width: 260px; flex: none; }
.main .rh { width: 40px; }
.cbody .wide { margin-top: 8px; height: 23px; }
</style>
